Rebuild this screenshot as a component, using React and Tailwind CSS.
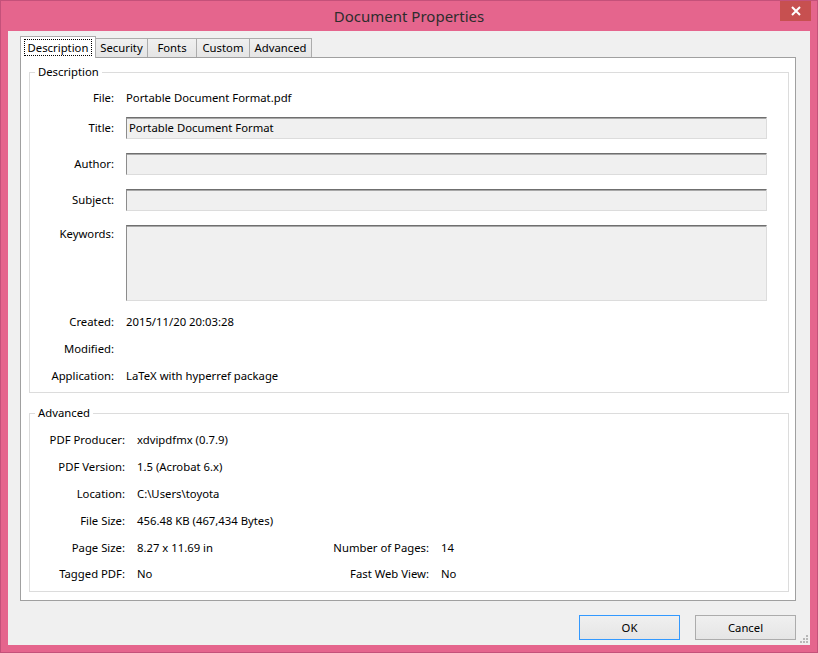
import React from 'react'

const font = { fontFamily: '"Noto Sans", "Liberation Sans", sans-serif' }

const Field = ({ value, tall }) => (
  <div
    className={`flex-1 bg-[#f0f0f0] border border-t-[#6f6f6f] border-l-[#8c8c8c] border-r-[#dcdcdc] border-b-[#dcdcdc] shadow-[inset_0_1px_0_#a8a8a8] pl-[2px] ${tall ? 'h-[76px] items-start' : 'h-[22px] items-center'} flex`}
  >
    <span className="leading-[18px]">{value}</span>
  </div>
)

const Row = ({ label, children, className = '' }) => (
  <div className={`flex h-[20px] items-center ${className}`}>
    <div className="w-[84px] text-right">{label}</div>
    <div className="ml-[12px] flex-1 flex items-center">{children}</div>
  </div>
)

const FieldRow = ({ label, value, tall, className = '' }) => (
  <div className={`flex ${tall ? 'items-start' : 'items-center'} ${className}`}>
    <div className={`w-[84px] text-right ${tall ? 'mt-[1px] leading-[16px]' : ''}`}>{label}</div>
    <div className="ml-[12px] flex-1 flex">
      <Field value={value} tall={tall} />
    </div>
  </div>
)

const AdvRow = ({ label, value, label2, value2, className = '' }) => (
  <div className={`flex h-[20px] items-center ${className}`}>
    <div className="w-[95px] text-right">{label}</div>
    <div className="ml-[12px] w-[180px]">{value}</div>
    {label2 && (
      <>
        <div className="w-[112px] text-right">{label2}</div>
        <div className="ml-[12px]">{value2}</div>
      </>
    )}
  </div>
)

const Group = ({ title, className = '', children }) => (
  <div className={`relative border border-[#dcdcdc] ${className}`}>
    <span className="absolute -top-[9px] left-[5px] bg-white px-[3px] leading-[16px]">{title}</span>
    {children}
  </div>
)

const App = () => {
  const tabs = [
    { name: 'Security', w: 'w-[53px]' },
    { name: 'Fonts', w: 'w-[50px]' },
    { name: 'Custom', w: 'w-[54px]' },
    { name: 'Advanced', w: 'w-[63px]' },
  ]

  return (
    <div
      className="w-[818px] h-[653px] flex flex-col bg-[#e5658d] border border-[#c4517a] text-[11.3px] text-black overflow-hidden"
      style={font}
    >
      {/* title bar */}
      <div className="h-[30px] flex items-start shrink-0">
        <div className="flex-1" />
        <div className="mt-[5px] text-[15px] leading-[20px] text-[#2d2d2d]">Document Properties</div>
        <div className="flex-1 flex justify-end">
          <div className="mr-[6px] w-[31px] h-[20px] bg-[#c75050] flex items-center justify-center">
            <svg width="10" height="10" viewBox="0 0 10 10">
              <path d="M1 1 L9 9 M9 1 L1 9" stroke="#fff" strokeWidth="2" />
            </svg>
          </div>
        </div>
      </div>

      {/* client area */}
      <div className="relative mx-[7px] h-[614px] shrink-0 bg-[#f0f0f0] pt-[5px] pl-[12px] pr-[14px] flex flex-col">
        {/* tabs */}
        <div className="flex items-end h-[21px]">
          <div className="relative z-10 w-[76px] h-[22px] -mb-px bg-white border border-b-0 border-[#acacac] flex items-start justify-center pt-[2px]">
            <span className="border border-dotted border-black px-[3px] leading-[15px]">Description</span>
          </div>
          {tabs.map((t) => (
            <div
              key={t.name}
              className={`${t.w} -ml-px h-[19px] border border-b-0 border-[#acacac] bg-gradient-to-b from-[#f0f0f0] to-[#e5e5e5] flex items-center justify-center leading-[16px]`}
            >
              {t.name}
            </div>
          ))}
        </div>

        {/* panel */}
        <div className="h-[544px] bg-white border border-[#a0a0a0] pl-[8px] pr-[6px] pt-[14px]">
          <Group title="Description" className="h-[321px] pt-[15px] pr-[21px]">
            <Row label="File:">Portable Document Format.pdf</Row>
            <FieldRow className="mt-[9px]" label="Title:" value="Portable Document Format" />
            <FieldRow className="mt-[14px]" label="Author:" value="" />
            <FieldRow className="mt-[14px]" label="Subject:" value="" />
            <FieldRow className="mt-[14px]" label="Keywords:" value="" tall />
            <Row className="mt-[11px]" label="Created:">2015/11/20 20:03:28</Row>
            <Row className="mt-[7px]" label="Modified:"></Row>
            <Row className="mt-[7px]" label="Application:">LaTeX with hyperref package</Row>
          </Group>

          <Group title="Advanced" className="mt-[20px] h-[179px] pt-[16px]">
            <AdvRow label="PDF Producer:" value="xdvipdfmx (0.7.9)" />
            <AdvRow className="mt-[7px]" label="PDF Version:" value="1.5 (Acrobat 6.x)" />
            <AdvRow className="mt-[7px]" label="Location:" value="C:\Users\toyota" />
            <AdvRow className="mt-[7px]" label="File Size:" value="456.48 KB (467,434 Bytes)" />
            <AdvRow className="mt-[7px]" label="Page Size:" value="8.27 x 11.69 in" label2="Number of Pages:" value2="14" />
            <AdvRow className="mt-[6px]" label="Tagged PDF:" value="No" label2="Fast Web View:" value2="No" />
          </Group>
        </div>

        {/* buttons */}
        <div className="flex justify-end gap-[15px] mt-[14px]">
          <button className="w-[101px] h-[25px] border border-[#3399ff] bg-gradient-to-b from-[#f0f0f0] to-[#e5e5e5] leading-[16px]">OK</button>
          <button className="w-[101px] h-[25px] border border-[#acacac] bg-gradient-to-b from-[#f0f0f0] to-[#e5e5e5] leading-[16px]">Cancel</button>
        </div>

        {/* resize grip */}
        <svg className="absolute right-[1px] bottom-[1px]" width="10" height="10" viewBox="0 0 10 10">
          <rect x="7" y="1" width="2" height="2" fill="#b8b8b8" />
          <rect x="4" y="4" width="2" height="2" fill="#b8b8b8" />
          <rect x="7" y="4" width="2" height="2" fill="#b8b8b8" />
          <rect x="1" y="7" width="2" height="2" fill="#b8b8b8" />
          <rect x="4" y="7" width="2" height="2" fill="#b8b8b8" />
          <rect x="7" y="7" width="2" height="2" fill="#b8b8b8" />
        </svg>
      </div>
    </div>
  )
}

export default App
